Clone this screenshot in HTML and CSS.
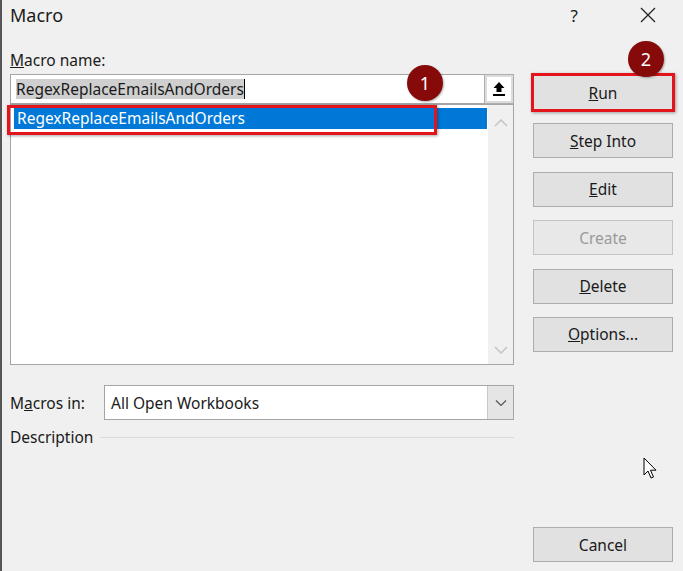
FILE: index.html
```html
<!DOCTYPE html>
<html lang="en">
<head>
    <meta charset="UTF-8">
    <title>Macro</title>
    <link rel="stylesheet" href="styles.css">
</head>
<body>
    <div class="dialog">
        <div class="titlebar">
            <span class="title">Macro</span>
            <span class="help">?</span>
            <span class="close">
                <svg width="16" height="16" viewBox="0 0 16 16"><path d="M1 1 L15 15 M15 1 L1 15" stroke="#222" stroke-width="1.3" fill="none"/></svg>
            </span>
        </div>
        <div class="content">
            <div class="main">
                <div class="field-label"><u>M</u>acro name:</div>
                <div class="name-row">
                    <div class="name-input"><span class="sel">RegexReplaceEmailsAndOrders</span><span class="caret"></span></div>
                    <div class="up-btn">
                        <svg width="14" height="16" viewBox="0 0 14 16"><path d="M7 1 L1.5 7 H4.5 V11 H9.5 V7 H12.5 Z" fill="#000"/><rect x="1" y="13" width="12" height="2" fill="#000"/></svg>
                    </div>
                    <span class="badge badge-one">1</span>
                </div>
                <div class="macro-list">
                    <div class="items">
                        <div class="item selected">RegexReplaceEmailsAndOrders</div>
                    </div>
                    <div class="scrollbar">
                        <svg width="14" height="8" viewBox="0 0 14 8"><path d="M1 7 L7 1 L13 7" stroke="#c4c4c4" stroke-width="1.5" fill="none"/></svg>
                        <svg width="14" height="8" viewBox="0 0 14 8"><path d="M1 1 L7 7 L13 1" stroke="#c4c4c4" stroke-width="1.5" fill="none"/></svg>
                    </div>
                    <div class="mark mark-item"></div>
                </div>
                <div class="macros-in">
                    <div class="field-label">M<u>a</u>cros in:</div>
                    <div class="select">
                        <span class="select-text">All Open Workbooks</span>
                        <div class="select-arrow">
                            <svg width="12" height="8" viewBox="0 0 12 8"><path d="M1 1.5 L6 6.5 L11 1.5" stroke="#555" stroke-width="1.2" fill="none"/></svg>
                        </div>
                    </div>
                </div>
                <div class="description">
                    <span>Description</span>
                    <div class="rule"></div>
                </div>
            </div>
            <div class="actions">
                <div class="btn run"><u>R</u>un<div class="mark mark-run"></div><span class="badge badge-two">2</span></div>
                <div class="btn"><u>S</u>tep Into</div>
                <div class="btn"><u>E</u>dit</div>
                <div class="btn disabled">Create</div>
                <div class="btn"><u>D</u>elete</div>
                <div class="btn"><u>O</u>ptions...</div>
                <div class="btn cancel">Cancel</div>
            </div>
        </div>
        <svg class="cursor" width="16" height="24" viewBox="0 0 16 24"><path d="M1 1 V18 L5 14 L8 21 L10.5 20 L7.5 13.2 H13 Z" fill="#fff" stroke="#000" stroke-width="1" stroke-linejoin="round"/></svg>
    </div>
</body>
</html>
```

FILE: styles.css
```css
body {
    margin: 0;
    background-color: #f0f0f0;
    font-family: "Noto Sans", "Open Sans", sans-serif;
    font-size: 15.5px;
    color: #1a1a1a;
}
.dialog {
    width: 683px;
    height: 571px;
    box-sizing: border-box;
    border-left: 2px solid #555;
    position: relative;
    overflow: hidden;
}
.titlebar {
    height: 30px;
    display: flex;
    align-items: center;
    padding-left: 8px;
}
.title {
    font-size: 18px;
    flex-grow: 1;
}
.help {
    font-size: 17px;
    margin-right: 62px;
}
.close {
    display: flex;
    margin-right: 27px;
}
.content {
    display: flex;
    padding-left: 8px;
}
.main {
    width: 504px;
}
.field-label {
    line-height: 20px;
}
.main > .field-label {
    margin-top: 20px;
    margin-bottom: 4px;
}
.name-row {
    display: flex;
    height: 30px;
    position: relative;
}
.name-input {
    flex-grow: 1;
    background: #fff;
    border: 1px solid #a5a5a5;
    border-right: none;
    display: flex;
    align-items: center;
    padding-left: 5px;
}
.sel {
    background: #cfcfcf;
    line-height: 20px;
}
.caret {
    width: 1px;
    height: 20px;
    background: #000;
}
.up-btn {
    width: 28px;
    border: 1px solid #adadad;
    box-shadow: inset 0 0 0 2px #dcdcdc;
    background: #fff;
    display: flex;
    justify-content: center;
    align-items: center;
}
.badge {
    position: absolute;
    width: 36px;
    height: 36px;
    border-radius: 50%;
    background: #860a0a;
    color: #fff;
    font-size: 18px;
    display: flex;
    justify-content: center;
    align-items: center;
    box-shadow: 1px 1px 2px rgba(0, 0, 0, 0.3);
    text-decoration: none;
}
.badge-one {
    left: 397px;
    top: -9px;
}
.badge-two {
    left: 94px;
    top: -35px;
}
.macro-list {
    height: 261px;
    box-sizing: border-box;
    border: 1px solid #a5a5a5;
    background: #fff;
    display: flex;
    position: relative;
}
.items {
    flex-grow: 1;
    padding: 3px 1px 0 3px;
}
.item {
    height: 21px;
    line-height: 21px;
    padding-left: 3px;
}
.item.selected {
    background: #0078d7;
    color: #fff;
}
.scrollbar {
    width: 25px;
    background: #f0f0f0;
    display: flex;
    flex-direction: column;
    justify-content: space-between;
    align-items: center;
    padding: 14px 0 10px;
}
.mark {
    position: absolute;
    border: 3px solid #e3141c;
    box-shadow: 1px 1px 3px rgba(0, 0, 0, 0.35);
}
.mark-item {
    left: -4px;
    top: 0;
    width: 424px;
    height: 24px;
}
.macros-in {
    display: flex;
    align-items: center;
    margin-top: 20px;
}
.macros-in .field-label {
    width: 94px;
}
.select {
    flex-grow: 1;
    height: 35px;
    box-sizing: border-box;
    border: 1px solid #a5a5a5;
    background: #fff;
    display: flex;
    align-items: center;
}
.select-text {
    flex-grow: 1;
    padding-left: 6px;
}
.select-arrow {
    width: 25px;
    height: 100%;
    background: #e5e5e5;
    border-left: 1px solid #c8c8c8;
    display: flex;
    justify-content: center;
    align-items: center;
}
.description {
    display: flex;
    align-items: center;
    margin-top: 7px;
    line-height: 20px;
}
.rule {
    flex-grow: 1;
    height: 1px;
    background: #dadada;
    margin-left: 7px;
}
.actions {
    width: 140px;
    margin-left: 19px;
    padding-top: 45px;
    display: flex;
    flex-direction: column;
    gap: 13.4px;
}
.btn {
    height: 35px;
    box-sizing: border-box;
    border: 1px solid #adadad;
    background: #e1e1e1;
    display: flex;
    justify-content: center;
    align-items: center;
    position: relative;
}
.btn.disabled {
    color: #9a9a9a;
    border-color: #c4c4c4;
    background: #e8e8e8;
}
.mark-run {
    inset: -3px;
}
.btn.cancel {
    margin-top: 162px;
}
.cursor {
    position: absolute;
    left: 641px;
    top: 457px;
}
```
